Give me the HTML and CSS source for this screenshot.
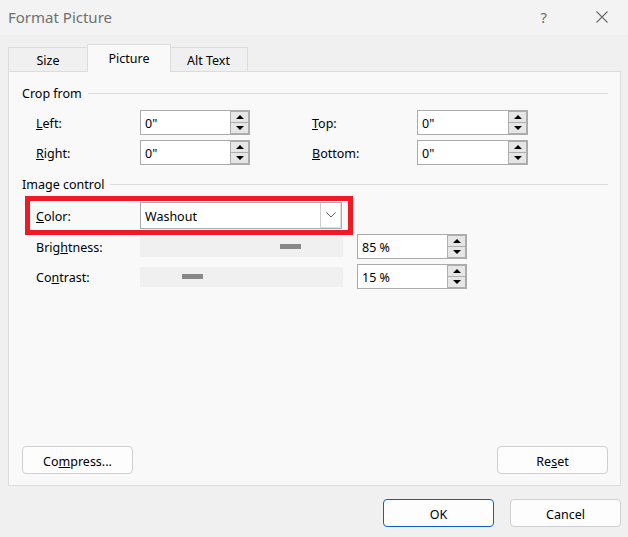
FILE: index.html
```html
<!DOCTYPE html>
<html>
<head>
<meta charset="utf-8">
<title>Format Picture</title>
<link rel="stylesheet" href="styles.css">
</head>
<body>
<div class="window">
  <div class="titlebar">
    <span class="title">Format Picture</span>
    <span class="help">?</span>
    <svg class="close" width="14" height="14" viewBox="0 0 14 14"><path d="M1.5 1.5 L12.5 12.5 M12.5 1.5 L1.5 12.5" stroke="#6a6a6a" stroke-width="1.1" fill="none"/></svg>
  </div>
  <div class="tabs">
    <div class="tab tab-size">Size</div>
    <div class="tab tab-picture active">Picture</div>
    <div class="tab tab-alt">Alt Text</div>
  </div>
  <div class="panel">
    <div class="group-title"><span>Crop from</span><span class="rule"></span></div>
    <div class="crop-grid">
      <label class="lbl"><u>L</u>eft:</label>
      <div class="spin"><span class="val">0"</span><span class="spin-btns"><span class="sb up"></span><span class="sb down"></span></span></div>
      <label class="lbl"><u>T</u>op:</label>
      <div class="spin"><span class="val">0"</span><span class="spin-btns"><span class="sb up"></span><span class="sb down"></span></span></div>
      <label class="lbl"><u>R</u>ight:</label>
      <div class="spin"><span class="val">0"</span><span class="spin-btns"><span class="sb up"></span><span class="sb down"></span></span></div>
      <label class="lbl"><u>B</u>ottom:</label>
      <div class="spin"><span class="val">0"</span><span class="spin-btns"><span class="sb up"></span><span class="sb down"></span></span></div>
    </div>
    <div class="group-title second"><span>Image control</span><span class="rule"></span></div>
    <div class="highlight">
      <label class="lbl"><u>C</u>olor:</label>
      <div class="combo"><span class="val">Washout</span><span class="combo-btn"><svg width="10" height="6" viewBox="0 0 10 6"><path d="M0.5 0.5 L5 5 L9.5 0.5" stroke="#606060" stroke-width="1" fill="none"/></svg></span></div>
    </div>
    <div class="row first-slider">
      <label class="lbl">Brig<u>h</u>tness:</label>
      <div class="track"><span class="thumb thumb-b"></span></div>
      <div class="spin wide"><span class="val">85 %</span><span class="spin-btns"><span class="sb up"></span><span class="sb down"></span></span></div>
    </div>
    <div class="row">
      <label class="lbl">Co<u>n</u>trast:</label>
      <div class="track"><span class="thumb thumb-c"></span></div>
      <div class="spin wide"><span class="val">15 %</span><span class="spin-btns"><span class="sb up"></span><span class="sb down"></span></span></div>
    </div>
    <div class="panel-buttons">
      <button class="btn">Co<u>m</u>press...</button>
      <button class="btn">Re<u>s</u>et</button>
    </div>
  </div>
  <div class="footer">
    <button class="btn primary">OK</button>
    <button class="btn">Cancel</button>
  </div>
</div>
</body>
</html>
```
FILE: styles.css
```css
html, body {
  margin: 0;
  padding: 0;
  background: #f0f0f0;
}
.window {
  width: 628px;
  height: 537px;
  background: #f0f0f0;
  font-family: "Noto Sans", "Open Sans", sans-serif;
  font-size: 12.5px;
  color: #000;
  overflow: hidden;
}
.titlebar {
  height: 35px;
  background: #f3f3f3;
  display: flex;
  align-items: center;
  padding-left: 8px;
  padding-bottom: 2px;
  box-sizing: border-box;
}
.title {
  font-size: 15px;
  color: #707070;
  flex: 1;
}
.help {
  font-size: 15px;
  color: #6a6a6a;
  margin-right: 48px;
}
.close {
  margin-right: 19px;
}
.tabs {
  margin-top: 9px;
  padding-left: 8px;
  height: 27px;
  display: flex;
  align-items: flex-end;
}
.tab {
  box-sizing: border-box;
  height: 24px;
  border: 1px solid #dcdcdc;
  border-bottom: none;
  background: #f0f0f0;
  display: flex;
  align-items: center;
  justify-content: center;
  padding-top: 1px;
}
.tab-size { width: 80px; }
.tab-picture { width: 84px; margin-left: -1px; }
.tab-alt { width: 78px; margin-left: -1px; border-left: none; }
.tab.active {
  height: 28px;
  background: #f9f9f9;
  margin-bottom: -1px;
  position: relative;
  z-index: 1;
  padding-top: 0;
  padding-bottom: 0;
}
.panel {
  margin-left: 8px;
  width: 613px;
  height: 415px;
  box-sizing: border-box;
  border: 1px solid #dcdcdc;
  background: #f9f9f9;
  padding: 12px 12px 11px 13px;
  display: flex;
  flex-direction: column;
}
.group-title {
  height: 18px;
  display: flex;
  align-items: center;
}
.group-title .rule {
  flex: 1;
  height: 1px;
  background: #dcdcdc;
  margin-left: 6px;
}
.group-title.second {
  margin-top: 10px;
}
.crop-grid {
  margin-top: 8px;
  margin-left: 14px;
  display: grid;
  grid-template-columns: 104px 110px 62px 105px 111px;
  grid-auto-rows: 25px;
  row-gap: 5px;
  align-items: center;
}
.crop-grid > :nth-child(3) { grid-column: 4; }
.crop-grid > :nth-child(7) { grid-column: 4; }
.lbl {
  display: block;
  padding-top: 1px;
}
.val {
  padding-top: 1px;
}
.spin {
  box-sizing: border-box;
  height: 25px;
  border: 1px solid #ababab;
  background: #fff;
  display: flex;
  align-items: center;
  justify-content: space-between;
  padding-left: 4px;
}
.spin.wide {
  width: 110px;
  margin-left: 14px;
}
.spin-btns {
  width: 19px;
  height: 23px;
  display: flex;
  flex-direction: column;
  justify-content: center;
}
.sb {
  box-sizing: border-box;
  width: 19px;
  height: 11px;
  border: 1px solid #adadad;
  background: #e6e6e6;
  display: flex;
  align-items: center;
  justify-content: center;
}
.sb.up { height: 12px; }
.sb.down { border-top: none; height: 11px; }
.sb.up::after {
  content: "";
  width: 0;
  height: 0;
  border-left: 4px solid transparent;
  border-right: 4px solid transparent;
  border-bottom: 4px solid #000;
}
.sb.down::after {
  content: "";
  width: 0;
  height: 0;
  border-left: 4px solid transparent;
  border-right: 4px solid transparent;
  border-top: 4px solid #000;
}
.highlight {
  margin-top: 3px;
  margin-left: 3px;
  width: 328px;
  box-sizing: border-box;
  border: 5px solid #ed1c24;
  padding: 1px 6px 1px 6px;
  display: flex;
  align-items: center;
}
.highlight .lbl {
  width: 104px;
}
.combo {
  box-sizing: border-box;
  width: 202px;
  height: 27px;
  border: 1px solid #ababab;
  background: #fff;
  display: flex;
  align-items: center;
  justify-content: space-between;
  padding-left: 4px;
}
.combo-btn {
  box-sizing: border-box;
  width: 21px;
  height: 25px;
  border-left: 1px solid #cfcfcf;
  border-right: 1px solid #dedede;
  border-bottom: 1px solid #dedede;
  display: flex;
  align-items: center;
  justify-content: center;
}
.row {
  margin-left: 14px;
  margin-top: 5px;
  height: 25px;
  display: flex;
  align-items: center;
}
.row.first-slider {
  margin-top: -1px;
}
.row .lbl {
  width: 104px;
}
.track {
  width: 203px;
  height: 20px;
  background: #f0f0f0;
  display: flex;
  align-items: center;
}
.thumb {
  height: 5px;
  width: 21px;
  background: #888888;
}
.thumb-b { margin-left: 140px; }
.thumb-c { margin-left: 42px; }
.panel-buttons {
  margin-top: auto;
  display: flex;
  justify-content: space-between;
}
.btn {
  box-sizing: border-box;
  width: 111px;
  height: 28px;
  border: 1px solid #d0d0d0;
  border-radius: 4px;
  background: #fdfdfd;
  font-family: "Noto Sans", "Open Sans", sans-serif;
  font-size: 12.5px;
  color: #000;
  padding: 2px 0 0 0;
}
.btn.primary {
  border-color: #0067c0;
}
.footer {
  margin-top: 13px;
  padding-right: 7px;
  display: flex;
  justify-content: flex-end;
  gap: 16px;
}
```
